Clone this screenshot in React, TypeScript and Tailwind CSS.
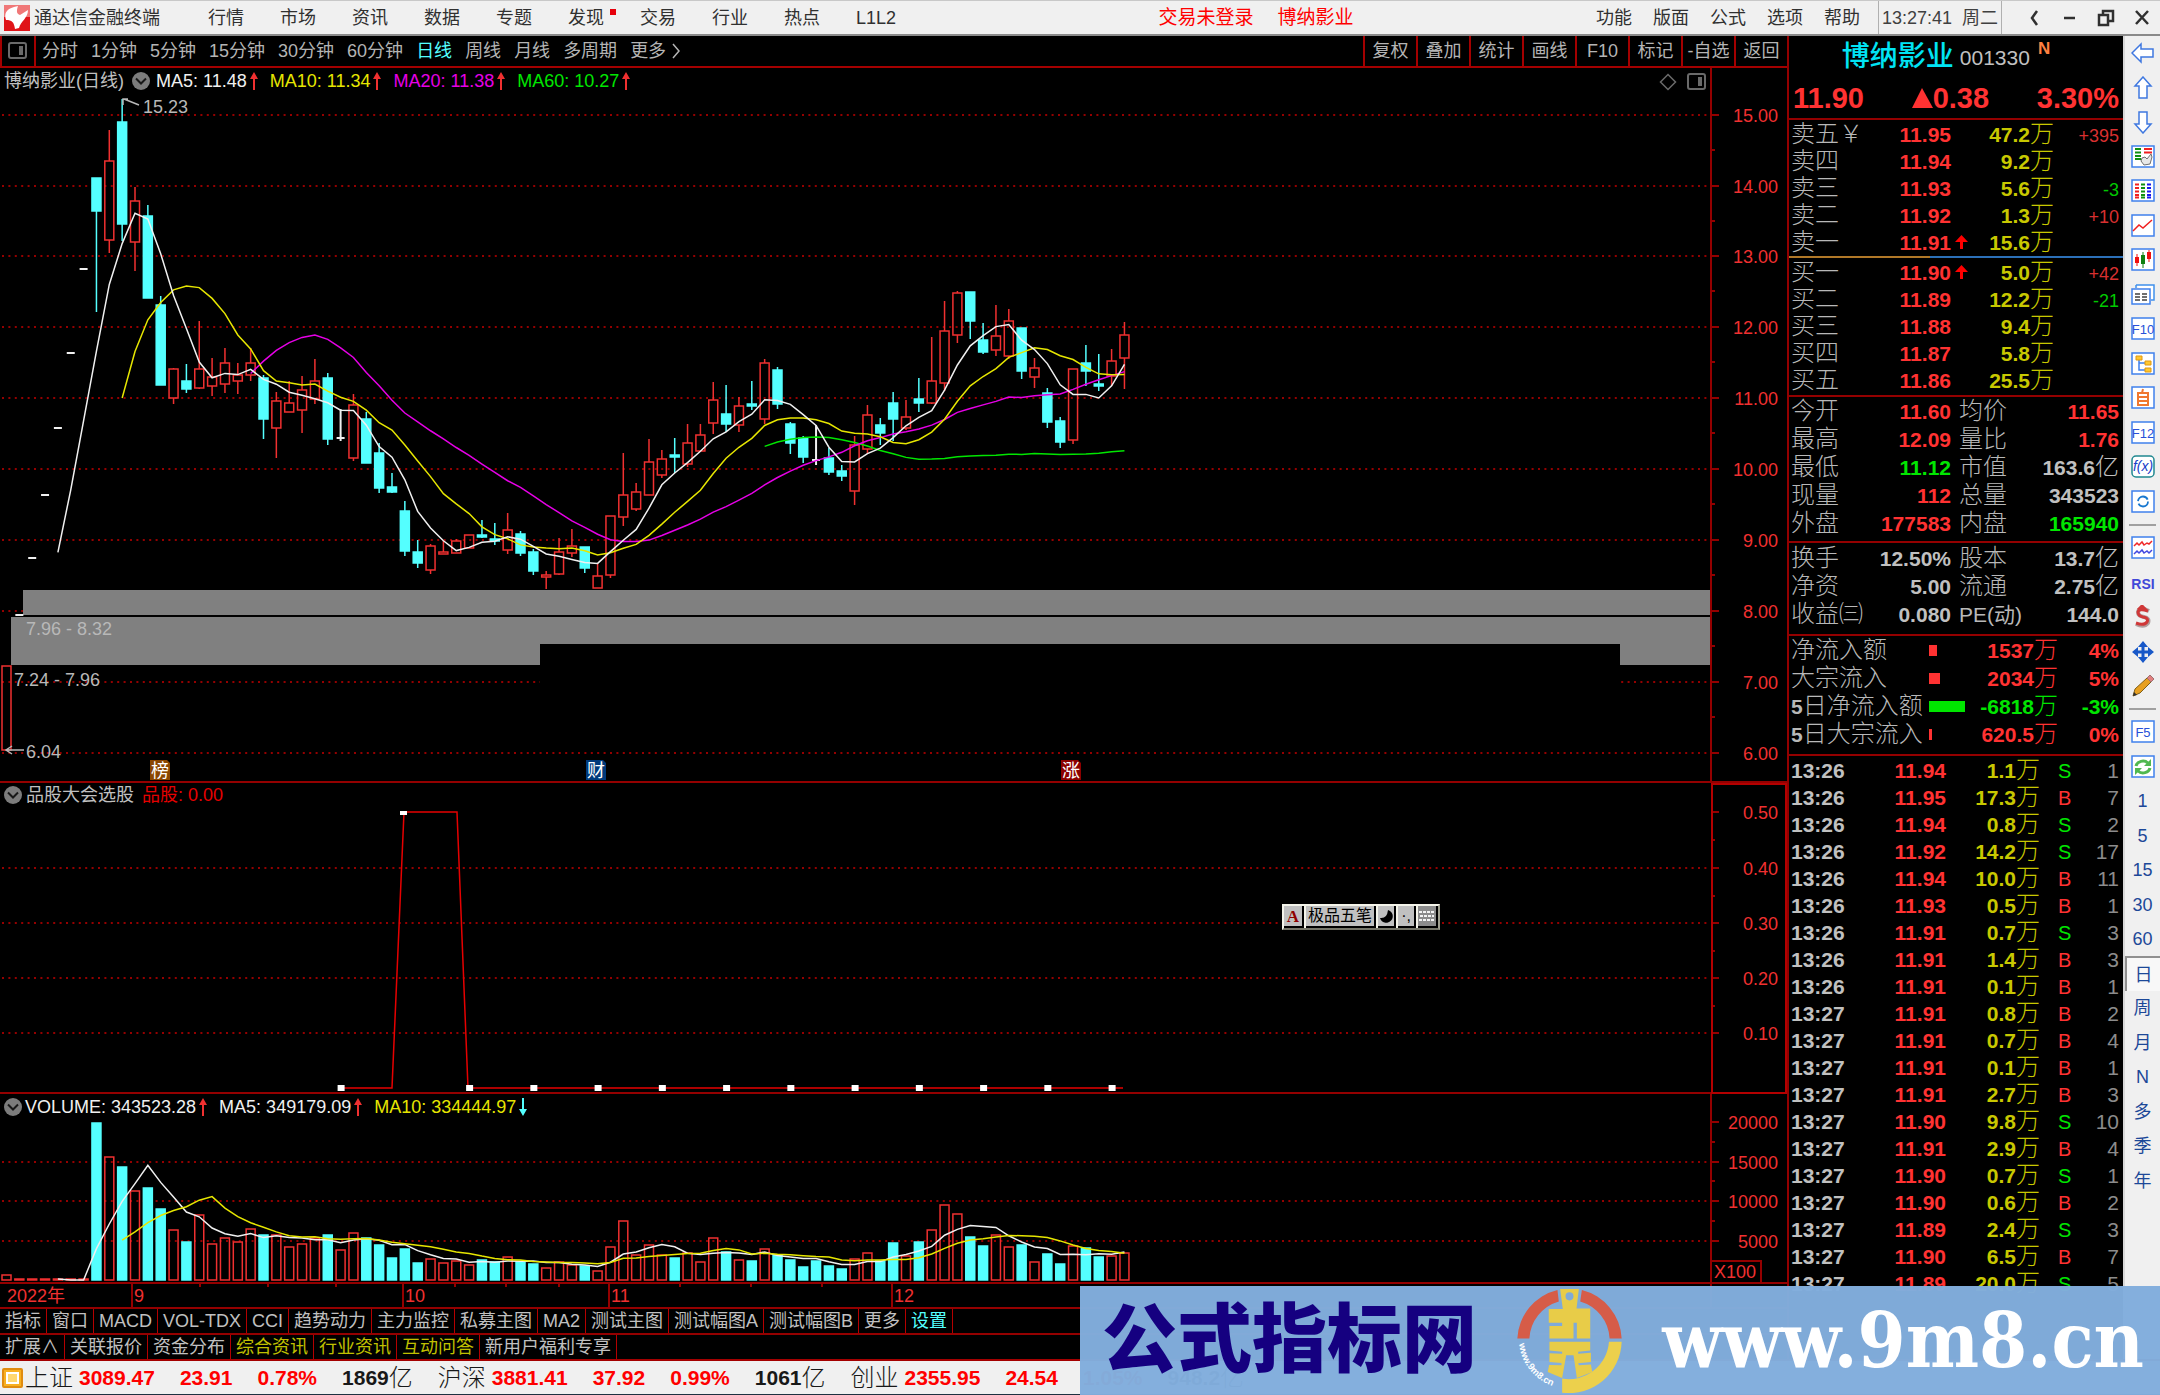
import type { ReactNode } from 'react'
import clsx from 'clsx'

type Kind = 'r' | 'c' | 'w'
// high, body top, body bottom, low, kind (all in chart units)
type Candle = [number, number, number, number, Kind]

const STEP = 12.85
const barX = (i: number) => 6.5 + STEP * i

const candles: Candle[] = [
    [665, 665, 749, 749, 'r'],
    [614, 614, 614, 614, 'w'],
    [557, 557, 557, 557, 'w'],
    [494, 494, 494, 494, 'w'],
    [427, 427, 427, 427, 'w'],
    [352, 352, 352, 352, 'w'],
    [268, 268, 268, 268, 'w'],
    [177, 177, 210, 311, 'c'],
    [129, 160, 239, 252, 'r'],
    [98, 121, 223, 240, 'c'],
    [186, 200, 241, 270, 'r'],
    [204, 215, 297, 297, 'c'],
    [295, 304, 384, 384, 'c'],
    [367, 368, 397, 403, 'r'],
    [363, 380, 388, 392, 'c'],
    [320, 368, 387, 388, 'r'],
    [357, 376, 385, 395, 'r'],
    [347, 362, 383, 392, 'r'],
    [362, 374, 380, 393, 'r'],
    [347, 362, 374, 380, 'r'],
    [374, 377, 418, 438, 'c'],
    [391, 400, 427, 457, 'r'],
    [380, 402, 411, 411, 'r'],
    [375, 389, 409, 432, 'r'],
    [358, 380, 398, 403, 'r'],
    [372, 377, 438, 444, 'c'],
    [408, 437, 437, 440, 'w'],
    [393, 404, 457, 460, 'r'],
    [411, 418, 462, 462, 'c'],
    [442, 452, 487, 492, 'c'],
    [472, 486, 491, 492, 'c'],
    [500, 510, 550, 555, 'c'],
    [539, 551, 562, 567, 'c'],
    [543, 545, 569, 573, 'r'],
    [540, 551, 553, 553, 'r'],
    [538, 540, 552, 552, 'r'],
    [534, 534, 547, 547, 'r'],
    [519, 534, 536, 537, 'c'],
    [522, 538, 540, 544, 'c'],
    [512, 529, 549, 553, 'r'],
    [530, 533, 552, 555, 'c'],
    [548, 551, 570, 574, 'c'],
    [570, 574, 576, 588, 'r'],
    [537, 551, 573, 574, 'r'],
    [528, 545, 552, 556, 'r'],
    [546, 546, 567, 572, 'c'],
    [562, 575, 587, 587, 'r'],
    [515, 515, 574, 577, 'r'],
    [452, 494, 516, 525, 'r'],
    [482, 491, 508, 510, 'r'],
    [438, 461, 494, 494, 'r'],
    [449, 458, 474, 477, 'r'],
    [437, 454, 456, 472, 'c'],
    [423, 442, 463, 466, 'r'],
    [423, 434, 450, 450, 'r'],
    [381, 399, 422, 433, 'r'],
    [384, 413, 423, 431, 'c'],
    [396, 405, 424, 431, 'r'],
    [380, 403, 405, 409, 'c'],
    [358, 362, 418, 423, 'r'],
    [366, 369, 403, 408, 'c'],
    [421, 423, 442, 453, 'c'],
    [435, 437, 456, 462, 'c'],
    [424, 459, 459, 464, 'w'],
    [447, 457, 471, 474, 'c'],
    [464, 470, 475, 480, 'c'],
    [435, 444, 490, 504, 'r'],
    [404, 414, 448, 453, 'r'],
    [417, 424, 432, 444, 'c'],
    [391, 402, 418, 440, 'c'],
    [399, 416, 427, 429, 'r'],
    [377, 398, 402, 411, 'c'],
    [336, 380, 402, 403, 'r'],
    [300, 330, 382, 390, 'r'],
    [290, 292, 334, 342, 'r'],
    [291, 291, 320, 338, 'c'],
    [322, 339, 351, 353, 'c'],
    [304, 335, 349, 355, 'r'],
    [308, 320, 355, 358, 'r'],
    [327, 327, 370, 378, 'c'],
    [357, 367, 376, 387, 'r'],
    [387, 392, 421, 427, 'c'],
    [416, 420, 441, 447, 'c'],
    [368, 368, 439, 443, 'r'],
    [344, 362, 370, 385, 'c'],
    [353, 383, 385, 390, 'c'],
    [348, 360, 375, 385, 'r'],
    [321, 334, 357, 388, 'r'],
]

const volumeTops = [
    1274, 1279, 1279, 1279, 1279, 1279, 1279, 1122, 1156, 1166, 1190, 1187, 1208, 1229, 1241, 1214, 1243, 1237, 1241,
    1228, 1234, 1234, 1246, 1243, 1237, 1234, 1249, 1232, 1237, 1244, 1257, 1248, 1262, 1258, 1262, 1260, 1264, 1259,
    1261, 1256, 1261, 1263, 1267, 1261, 1264, 1265, 1270, 1246, 1220, 1254, 1244, 1254, 1257, 1252, 1261, 1237, 1251,
    1259, 1260, 1248, 1254, 1259, 1266, 1260, 1265, 1268, 1258, 1252, 1260, 1242, 1255, 1241, 1229, 1204, 1213, 1236,
    1245, 1234, 1246, 1244, 1261, 1253, 1263, 1245, 1247, 1256, 1255, 1252,
]
const VOLUME_BASE = 1280

const closes = candles.map(([, top, bottom, , kind]) => (kind === 'c' ? bottom : top))

const average = (values: number[], period: number) =>
    values
        .map((_, i) => {
            if (i < period - 1) return ''
            const slice = values.slice(i - period + 1, i + 1)
            return `${barX(i)},${slice.reduce((a, b) => a + b, 0) / period}`
        })
        .filter(Boolean)
        .join(' ')

const RED = '#f03030'
const CYAN = '#54ffff'
const LINE = '#940000'
const CHART_TEXT = 'font-["Liberation_Sans","Noto_Sans_CJK_SC",sans-serif] text-[18px]'

const menuItems = ['行情', '市场', '资讯', '数据', '专题', '发现', '交易', '行业', '热点', 'L1L2']
const systemItems = ['功能', '版面', '公式', '选项', '帮助']
const periods = ['分时', '1分钟', '5分钟', '15分钟', '30分钟', '60分钟', '日线', '周线', '月线', '多周期']
const chartTools = ['复权', '叠加', '统计', '画线', 'F10', '标记', '-自选', '返回']

const indicatorTabs = [
    '指标', '窗口', 'MACD', 'VOL-TDX', 'CCI', '趋势动力', '主力监控', '私募主图', 'MA2',
    '测试主图', '测试幅图A', '测试幅图B', '更多', '设置',
]
const extensionTabs = ['扩展∧', '关联报价', '资金分布', '综合资讯', '行业资讯', '互动问答', '新用户福利专享']

const sells = [
    ['卖五￥', '11.95', '', '47.2', '+395'],
    ['卖四', '11.94', '', '9.2', ''],
    ['卖三', '11.93', '', '5.6', '-3'],
    ['卖二', '11.92', '', '1.3', '+10'],
    ['卖一', '11.91', 'up', '15.6', ''],
]
const buys = [
    ['买一', '11.90', 'up', '5.0', '+42'],
    ['买二', '11.89', '', '12.2', '-21'],
    ['买三', '11.88', '', '9.4', ''],
    ['买四', '11.87', '', '5.8', ''],
    ['买五', '11.86', '', '25.5', ''],
]

const RED_TEXT = 'text-[#ff3232]'
const GREEN_TEXT = 'text-[#00e600]'
const GRAY_TEXT = 'text-[#c0c0c0]'

const priceStats = [
    ['今开', '11.60', RED_TEXT, '均价', '11.65', '', RED_TEXT],
    ['最高', '12.09', RED_TEXT, '量比', '1.76', '', RED_TEXT],
    ['最低', '11.12', GREEN_TEXT, '市值', '163.6', '亿', GRAY_TEXT],
    ['现量', '112', RED_TEXT, '总量', '343523', '', GRAY_TEXT],
    ['外盘', '177583', RED_TEXT, '内盘', '165940', '', GREEN_TEXT],
]
const companyStats = [
    ['换手', '12.50%', GRAY_TEXT, '股本', '13.7', '亿', GRAY_TEXT],
    ['净资', '5.00', GRAY_TEXT, '流通', '2.75', '亿', GRAY_TEXT],
    ['收益㈢', '0.080', GRAY_TEXT, 'PE(动)', '144.0', '', GRAY_TEXT],
]
const flows = [
    { label: '净流入额', bar: 8, value: '1537', percent: '4%', up: true },
    { label: '大宗流入', bar: 11, value: '2034', percent: '5%', up: true },
    { label: '5日净流入额', bar: 36, value: '-6818', percent: '-3%', up: false },
    { label: '5日大宗流入', bar: 3, value: '620.5', percent: '0%', up: true },
]
const ticks = [
    ['13:26', '11.94', '1.1', 'S', '1'],
    ['13:26', '11.95', '17.3', 'B', '7'],
    ['13:26', '11.94', '0.8', 'S', '2'],
    ['13:26', '11.92', '14.2', 'S', '17'],
    ['13:26', '11.94', '10.0', 'B', '11'],
    ['13:26', '11.93', '0.5', 'B', '1'],
    ['13:26', '11.91', '0.7', 'S', '3'],
    ['13:26', '11.91', '1.4', 'B', '3'],
    ['13:26', '11.91', '0.1', 'B', '1'],
    ['13:27', '11.91', '0.8', 'B', '2'],
    ['13:27', '11.91', '0.7', 'B', '4'],
    ['13:27', '11.91', '0.1', 'B', '1'],
    ['13:27', '11.91', '2.7', 'B', '3'],
    ['13:27', '11.90', '9.8', 'S', '10'],
    ['13:27', '11.91', '2.9', 'B', '4'],
    ['13:27', '11.90', '0.7', 'S', '1'],
    ['13:27', '11.90', '0.6', 'B', '2'],
    ['13:27', '11.89', '2.4', 'S', '3'],
    ['13:27', '11.90', '6.5', 'B', '7'],
    ['13:27', '11.89', '20.0', 'S', '5'],
]

const GridLine = ({ y, to = 1709 }: { y: number; to?: number }) => (
    <line x1="2" x2={to} y1={y} y2={y} stroke={LINE} strokeWidth="2" strokeDasharray="2 4.4" />
)

const AxisLabel = ({ y, children }: { y: number; children: string }) => (
    <>
        <line x1="1712" x2="1719" y1={y} y2={y} stroke={LINE} strokeWidth="2" />
        <text x="1778" y={y + 7} textAnchor="end" fill={RED}>
            {children}
        </text>
    </>
)

const Arrow = ({ down = false }: { down?: boolean }) => (
    <svg width="8" height="18" viewBox="0 0 8 18" className={clsx('shrink-0', down && 'rotate-180')} aria-hidden="true">
        <path d="M4 0 8 7H5V18H3V7H0Z" fill={down ? CYAN : RED} />
    </svg>
)

const Collapse = () => (
    <button aria-label="收起" className="flex size-[18px] items-center justify-center rounded-full bg-[#7c7c7c]">
        <svg width="12" height="8" viewBox="0 0 12 8" fill="none" stroke="#181818" strokeWidth="2">
            <path d="M1 1.5 6 6.5 11 1.5" />
        </svg>
    </button>
)

const Badge = ({ x, fill, children }: { x: number; fill: string; children: string }) => (
    <g>
        <path d={`M${x} 759h17l3 3v17h-20z`} fill={fill} />
        <text x={x + 1} y="776" fill="#fff">
            {children}
        </text>
    </g>
)

const PanelIcon = () => (
    <svg width="20" height="18" viewBox="0 0 20 18" fill="none" stroke="#6a6a6a" strokeWidth="2">
        <rect x="1" y="1" width="17" height="15" rx="2" />
        <rect x="11" y="4" width="4" height="9" fill="#6a6a6a" stroke="none" />
    </svg>
)

const PriceChart = () => (
    <section className="relative">
        <svg viewBox="0 67 1787 715" className={clsx('block h-auto w-full', CHART_TEXT)}>
            {Array.from({ length: 10 }, (_, i) => {
                const y = Math.round(113.6 + i * 70.9)
                return (
                    <g key={i}>
                        <GridLine y={y} />
                        <line x1="1712" x2="1715" y1={y + 35} y2={y + 35} stroke={LINE} strokeWidth="2" />
                        <AxisLabel y={y}>{(15 - i).toFixed(2)}</AxisLabel>
                    </g>
                )
            })}

            <rect x="23" y="589" width="1688" height="25" fill="#808080" />
            <rect x="11" y="616" width="1700" height="48" fill="#808080" />
            <rect x="540" y="643" width="1080" height="46" fill="#000" />

            {candles.map(([high, top, bottom, low, kind], i) => {
                const x = barX(i)
                if (kind === 'w') {
                    return (
                        <g key={i} stroke="#f0f0f0" strokeWidth="2">
                            <line x1={x - 4} x2={x + 4} y1={top} y2={top} />
                            {high !== low && <line x1={x} x2={x} y1={high} y2={low} />}
                        </g>
                    )
                }
                const color = kind === 'r' ? RED : CYAN
                return (
                    <g key={i} stroke={color} strokeWidth="1.5">
                        <path d={`M${x} ${high}V${top}M${x} ${bottom}V${low}`} />
                        <rect
                            x={x - 4.5}
                            y={top}
                            width="9"
                            height={bottom - top}
                            fill={kind === 'c' ? color : 'none'}
                        />
                    </g>
                )
            })}

            <g fill="none" strokeWidth="1.5">
                <polyline points={average(closes, 60)} stroke="#00e600" />
                <polyline points={average(closes, 20)} stroke="#e600e6" />
                <polyline points={average(closes, 10)} stroke="#e6e600" />
                <polyline points={average(closes, 5)} stroke="#f0f0f0" />
            </g>

            <g fill="#b8b8b8">
                <path d="M123 104V98H128M124 98 139 104" fill="none" stroke="#b8b8b8" strokeWidth="1.5" />
                <text x="143" y="112">15.23</text>
                <text x="26" y="634">7.96 - 8.32</text>
                <text x="14" y="685">7.24 - 7.96</text>
                <path d="M24 749H6M12 745 6 749 12 753" fill="none" stroke="#b8b8b8" strokeWidth="1.5" />
                <text x="26" y="757">6.04</text>
            </g>

            <Badge x={150} fill="#8a4600">榜</Badge>
            <Badge x={586} fill="#003a7c">财</Badge>
            <Badge x={1061} fill="#8c0000">涨</Badge>
            <path d="M1711 67V781M0 781H1787" stroke={LINE} strokeWidth="2" />
        </svg>
        <div className="absolute left-1 top-0 flex h-[26px] items-center whitespace-nowrap">
            <span className="text-[#c0c0c0]">博纳影业(日线)</span>
            <span className="ml-2 mr-1.5">
                <Collapse />
            </span>
            <div className="flex items-center gap-3">
                <span className="flex items-center gap-[3px] text-[#f0f0f0]">MA5: 11.48<Arrow /></span>
                <span className="flex items-center gap-[3px] text-[#e6e600]">MA10: 11.34<Arrow /></span>
                <span className="flex items-center gap-[3px] text-[#e600e6]">MA20: 11.38<Arrow /></span>
                <span className="flex items-center gap-[3px] text-[#00e600]">MA60: 10.27<Arrow /></span>
            </div>
        </div>
        <div className="absolute right-20 top-0 flex h-7 items-center gap-2.5">
            <svg width="18" height="18" viewBox="0 0 18 18" fill="none" stroke="#6a6a6a" strokeWidth="1.5">
                <path d="M9 1.5 16.5 9 9 16.5 1.5 9Z" />
            </svg>
            <PanelIcon />
        </div>
    </section>
)

const signalMarks = [26, 36, 41, 46, 51, 56, 61, 66, 71, 76, 81, 86]

const SignalChart = () => (
    <section className="relative">
        <svg viewBox="0 782 1787 311" className={clsx('block h-auto w-full', CHART_TEXT)}>
            {[867, 922, 977, 1032].map((y) => (
                <GridLine key={y} y={y} />
            ))}
            {[811, 867, 922, 977, 1032].map((y, i) => (
                <g key={y}>
                    <AxisLabel y={y}>{(0.5 - i * 0.1).toFixed(2)}</AxisLabel>
                    {i < 4 && <line x1="1712" x2="1715" y1={y + 28} y2={y + 28} stroke={LINE} strokeWidth="2" />}
                </g>
            ))}
            <polyline points="341,1087 392,1087 404,811 457,811 468,1087 1123,1087" fill="none" stroke="#e60000" strokeWidth="1.5" />
            <rect x="400" y="810" width="7" height="4" fill="#fff" />
            {signalMarks.map((i) => (
                <rect key={i} x={barX(i) - 3} y="1084" width="7" height="6" fill="#fff" />
            ))}
            <path d="M0 1092H1711" stroke={LINE} strokeWidth="2" />
            <rect x="1712" y="783" width="74" height="309" fill="none" stroke="#b40000" strokeWidth="2" />
        </svg>
        <div className="absolute left-1 top-0 flex h-6 items-center gap-1 whitespace-nowrap">
            <Collapse />
            <span className="text-[#c0c0c0]">品股大会选股</span>
            <span className="ml-1 text-[#e60000]">品股: 0.00</span>
        </div>
        <div className="absolute left-[1282px] top-[121px] flex h-[26px] items-stretch gap-0.5 border-2 border-[#f4f4ea] border-b-[#77776a] border-r-[#a0a090] bg-[#f4f4ea] text-base text-black">
            <button className="w-5 border-b-2 border-r-2 border-black bg-[#c0c0c0] font-['Liberation_Serif',serif] text-[17px] font-bold leading-none text-[#900000]">
                A
            </button>
            <button className="border-b-2 border-r-2 border-black bg-[#c0c0c0] px-0.5 leading-none">极品五笔</button>
            <button aria-label="半角" className="w-[18px] border-b-2 border-r-2 border-black bg-[#c0c0c0] pl-0.5">
                <svg width="13" height="13" viewBox="0 0 13 13">
                    <path d="M8 0A6.500 6.500 0 1 1 0 8Q7 9 8 0Z" />
                </svg>
            </button>
            <button className="w-[18px] border-b-2 border-r-2 border-black bg-[#c0c0c0] leading-none">·,</button>
            <button aria-label="软键盘" className="w-5 border-b-2 border-r-2 border-black bg-[#8c8c8c]">
                <svg width="17" height="14" viewBox="0 0 17 14" stroke="#f4f4f4" strokeWidth="2" strokeDasharray="3 1">
                    <path d="M1 3H16M2 7H16M1 11H16" />
                </svg>
            </button>
        </div>
    </section>
)

const months: [number, string][] = [
    [132, '9'],
    [403, '10'],
    [609, '11'],
    [892, '12'],
]
const weeks = [200, 268, 336, 455, 506, 559, 680, 751, 822]

const VolumeChart = () => (
    <section className="relative">
        <svg viewBox="0 1093 1787 213" className={clsx('block h-auto w-full', CHART_TEXT)}>
            {[1161, 1200, 1240].map((y) => (
                <g key={y}>
                    <GridLine y={y} />
                    <line x1="1712" x2="1715" y1={y - 20} y2={y - 20} stroke={LINE} strokeWidth="2" />
                </g>
            ))}
            <AxisLabel y={1121}>20000</AxisLabel>
            <AxisLabel y={1161}>15000</AxisLabel>
            <AxisLabel y={1200}>10000</AxisLabel>
            <AxisLabel y={1240}>5000</AxisLabel>
            {volumeTops.map((top, i) => {
                const filled = candles[i][4] === 'c' || i === 63
                return (
                    <rect
                        key={i}
                        x={barX(i) - 4.5}
                        y={Math.min(top, VOLUME_BASE - 2)}
                        width="9"
                        height={Math.max(VOLUME_BASE - top - 1, 1)}
                        fill={filled ? CYAN : 'none'}
                        stroke={filled ? CYAN : RED}
                        strokeWidth="1.5"
                    />
                )
            })}
            <g fill="none" strokeWidth="1.5">
                <polyline points={average(volumeTops, 5)} stroke="#f0f0f0" />
                <polyline points={average(volumeTops, 10)} stroke="#e6e600" />
            </g>
            <path d="M1711 1093V1306M0 1282H1787M1711 1260H1761V1282" fill="none" stroke={LINE} strokeWidth="2" />
            <text x="1714" y="1277" fill={RED}>X100</text>
            <text x="7" y="1301" fill={RED}>2022年</text>
            {months.map(([x, label]) => (
                <g key={x}>
                    <path d={`M${x} 1282V1306`} stroke={LINE} strokeWidth="2" />
                    <text x={x + 2} y="1301" fill={RED}>
                        {label}
                    </text>
                </g>
            ))}
            {weeks.map((x) => (
                <path key={x} d={`M${x} 1282V1286`} stroke={LINE} strokeWidth="2" />
            ))}
        </svg>
        <div className="absolute left-1 top-0 flex h-[26px] items-center gap-3 whitespace-nowrap">
            <span className="flex items-center gap-[3px] text-[#f0f0f0]"><Collapse />VOLUME: 343523.28<Arrow /></span>
            <span className="flex items-center gap-[3px] text-[#f0f0f0]">MA5: 349179.09<Arrow /></span>
            <span className="flex items-center gap-[3px] text-[#e6e600]">MA10: 334444.97<Arrow down /></span>
        </div>
    </section>
)

const WindowIcon = ({ label, d }: { label: string; d: string }) => (
    <button aria-label={label} className="flex w-9 justify-center">
        <svg width="20" height="20" viewBox="0 0 20 20" fill="none" stroke="#303030" strokeWidth="2.5">
            <path d={d} />
        </svg>
    </button>
)

const TitleBar = () => (
    <header className="flex h-9 items-center whitespace-nowrap border-b-2 border-t border-b-[#8a8a8a] border-t-[#c8c8c8] bg-[#f0f0f0] text-[#303030]">
        <svg width="26" height="26" viewBox="0 0 26 26" className="ml-1 mr-1 shrink-0" aria-hidden="true">
            <rect width="26" height="26" fill="#e01418" />
            <rect width="26" height="12" fill="#f07878" />
            <path d="M10 2 14 1C12 7 13 9 16 10L24 5C24 13 17 16 15 23L11 24C10 17 8 15 2 15C0 9 2 4 10 2Z" fill="#fff" />
        </svg>
        <h1>通达信金融终端</h1>
        <nav className="ml-12 flex gap-9">
            {menuItems.map((item) => (
                <button key={item} className="relative">
                    {item}
                    {item === '发现' && <span className="absolute -right-3 top-0 size-1.5 bg-red-600" />}
                </button>
            ))}
        </nav>
        <div className="flex-[13]" />
        <div className="flex gap-6 text-[19px] text-[#ff0000]">
            <button>交易未登录</button>
            <button>博纳影业</button>
        </div>
        <div className="flex-[12]" />
        <nav className="flex gap-[21px]">
            {systemItems.map((item) => (
                <button key={item}>{item}</button>
            ))}
        </nav>
        <div className="ml-[18px] flex h-full items-center gap-2.5 border-x border-[#b0b0b0] px-[3px] text-[#404040]">
            <time className="font-['Liberation_Sans',sans-serif]">13:27:41</time>
            <span>周二</span>
        </div>
        <div className="ml-3.5 flex">
            <WindowIcon label="后退" d="M13 3 8 10 13 17" />
            <WindowIcon label="最小化" d="M4 10H15" />
            <WindowIcon label="还原" d="M3 7H12V17H3ZM7 7V3H17V13H12" />
            <WindowIcon label="关闭" d="M4 3 16 16M16 3 4 16" />
        </div>
    </header>
)

const Toolbar = () => (
    <div className="flex h-8 items-stretch whitespace-nowrap border-b-2 border-[#a40000] text-[#b4b4b4]">
        <button aria-label="面板" className="flex w-[36px] items-center justify-center border-x-2 border-[#a40000]">
            <PanelIcon />
        </button>
        <div className="ml-1.5 flex items-center gap-[13px]">
            {periods.map((item) => (
                <button key={item} className={item === '日线' ? 'text-[#54ffff]' : ''}>
                    {item}
                </button>
            ))}
            <button className="flex items-center gap-1.5">
                更多
                <svg width="8" height="16" viewBox="0 0 8 16" fill="none" stroke="#b4b4b4" strokeWidth="1.5">
                    <path d="M1 1 7 8 1 15" />
                </svg>
            </button>
        </div>
        <div className="ml-auto flex">
            {chartTools.map((item) => (
                <button key={item} className="w-[53px] border-l-2 border-[#a40000]">
                    {item}
                </button>
            ))}
        </div>
    </div>
)

const tabColor = (tab: string) => {
    if (tab === '设置') return 'text-[#54ffff]'
    if (['综合资讯', '行业资讯', '互动问答'].includes(tab)) return 'text-[#c0c000]'
    return 'text-[#c0c0c0]'
}

const TabRow = ({ tabs }: { tabs: string[] }) => (
    <div className="flex h-[26px] items-stretch whitespace-nowrap border-t-2 border-[#940000]">
        {tabs.map((tab) => (
            <button key={tab} className={clsx('border-r border-[#b40000] px-[5px] leading-none', tabColor(tab))}>
                {tab}
            </button>
        ))}
    </div>
)

const NUMBER = "font-['Liberation_Sans','Noto_Sans_CJK_SC',sans-serif] text-[21px] font-bold"
const UNIT = "font-['Noto_Sans_CJK_SC',sans-serif] text-[24px] font-light"

const Depth = ({ rows }: { rows: string[][] }) => (
    <table className="w-full table-fixed whitespace-nowrap leading-none">
        <colgroup>
            <col className="w-[72px]" />
            <col className="w-[88px]" />
            <col className="w-[22px]" />
            <col className="w-[81px]" />
            <col />
        </colgroup>
        <tbody>
            {rows.map(([label, price, up, volume, change]) => (
                <tr key={label} className="h-[27px] align-baseline">
                    <th className={clsx('p-0 text-left text-[#b8b8b8]', UNIT)}>{label}</th>
                    <td className={clsx('p-0 text-right', NUMBER, RED_TEXT)}>{price}</td>
                    <td className="p-0 pl-1 align-middle">
                        {up && (
                            <svg width="13" height="14" viewBox="0 0 13 14" fill="#ff0000" aria-hidden="true">
                                <path d="M6.5 0 13 7H8V14H5V7H0Z" />
                            </svg>
                        )}
                    </td>
                    <td className={clsx('p-0 text-right text-[#c8c800]', NUMBER)}>
                        {volume}
                        <span className={UNIT}>万</span>
                    </td>
                    <td
                        className={clsx(
                            "p-0 text-right font-['Liberation_Sans',sans-serif] text-[18px]",
                            change.startsWith('-') ? 'text-[#00c800]' : 'text-[#d83030]',
                        )}
                    >
                        {change}
                    </td>
                </tr>
            ))}
        </tbody>
    </table>
)

const Stats = ({ rows }: { rows: string[][] }) => (
    <table className="w-full table-fixed whitespace-nowrap leading-none">
        <colgroup>
            <col className="w-[72px]" />
            <col className="w-[88px]" />
            <col className="w-[76px]" />
            <col />
        </colgroup>
        <tbody>
            {rows.map(([label, value, color, label2, value2, unit, color2]) => (
                <tr key={label} className="h-7 align-baseline">
                    <th className={clsx('p-0 text-left text-[#b8b8b8]', UNIT)}>{label}</th>
                    <td className={clsx('p-0 text-right', NUMBER, color)}>{value}</td>
                    <th className={clsx('p-0 pl-2 text-left text-[#b8b8b8]', UNIT)}>
                        {label2.startsWith('PE') ? (
                            <span className="font-['Liberation_Sans','Noto_Sans_CJK_SC',sans-serif] text-[21px] font-normal">
                                {label2}
                            </span>
                        ) : (
                            label2
                        )}
                    </th>
                    <td className={clsx('p-0 text-right', NUMBER, color2)}>
                        {value2}
                        {unit && <span className={UNIT}>{unit}</span>}
                    </td>
                </tr>
            ))}
        </tbody>
    </table>
)

const QuotePanel = () => (
    <aside className="w-[336px] shrink-0 border-l-2 border-[#940000] bg-black">
        <div className="flex h-[82px] flex-col">
            <div className="flex h-[42px] items-center justify-center pr-5">
                <h2 className="text-[28px] font-medium leading-none text-[#00e4f4]">博纳影业</h2>
                <span className="ml-1.5 font-['Liberation_Sans',sans-serif] text-[21px] text-[#c0c0c0]">001330</span>
                <sup className="ml-2 font-['Liberation_Sans',sans-serif] text-[17px] font-bold text-[#ff8040]">N</sup>
            </div>
            <div className="flex items-center justify-between px-1 font-['Liberation_Sans',sans-serif] text-[29px] font-bold leading-10 text-[#ff3232]">
                <span>11.90</span>
                <span className="flex items-center">
                    <svg width="21" height="20" viewBox="0 0 21 20" fill="#ff3232" aria-hidden="true">
                        <path d="M10 0 21 20H0Z" />
                    </svg>
                    0.38
                </span>
                <span>3.30%</span>
            </div>
        </div>
        <div className="border-t-2 border-[#940000] pb-px pl-0.5 pr-1">
            <Depth rows={sells} />
        </div>
        <div className="flex h-0.5">
            <div className="w-[141px] bg-[#b07828]" />
            <div className="flex-1 bg-[#2c70b8]" />
        </div>
        <div className="pb-0.5 pl-0.5 pr-1">
            <Depth rows={buys} />
        </div>
        <div className="border-t-2 border-[#940000] pb-1 pl-0.5 pr-1">
            <Stats rows={priceStats} />
        </div>
        <div className="border-t-2 border-[#940000] pb-1.5 pl-0.5 pr-1 pt-px">
            <Stats rows={companyStats} />
        </div>
        <div className="border-t-2 border-[#940000] pb-1.5 pl-0.5 pr-1">
            <table className="w-full table-fixed whitespace-nowrap leading-none">
                <colgroup>
                    <col className="w-[138px]" />
                    <col className="w-9" />
                    <col className="w-[93px]" />
                    <col />
                </colgroup>
                <tbody>
                    {flows.map(({ label, bar, value, percent, up }) => (
                        <tr key={label} className={clsx('h-7 align-baseline', up ? RED_TEXT : GREEN_TEXT)}>
                            <th className={clsx('p-0 text-left text-[#b8b8b8]', UNIT)}>
                                {label.startsWith('5') && <span className={NUMBER}>5</span>}
                                {label.replace('5', '')}
                            </th>
                            <td className="p-0 align-middle">
                                <div className="h-[11px] bg-current" style={{ width: bar }} />
                            </td>
                            <td className={clsx('p-0 text-right', NUMBER)}>
                                {value}
                                <span className={UNIT}>万</span>
                            </td>
                            <td className={clsx('p-0 text-right', NUMBER)}>{percent}</td>
                        </tr>
                    ))}
                </tbody>
            </table>
        </div>
        <div className="border-t-2 border-[#940000] pl-0.5 pr-1">
            <table className="w-full table-fixed whitespace-nowrap leading-none">
                <colgroup>
                    <col className="w-14" />
                    <col className="w-[99px]" />
                    <col className="w-[94px]" />
                    <col className="w-10" />
                    <col />
                </colgroup>
                <tbody>
                    {ticks.map(([time, price, volume, side, count], i) => (
                        <tr key={i} className="h-[27px] align-baseline">
                            <td className={clsx('p-0', NUMBER, GRAY_TEXT)}>{time}</td>
                            <td className={clsx('p-0 text-right', NUMBER, RED_TEXT)}>{price}</td>
                            <td className={clsx('p-0 text-right text-[#c8c800]', NUMBER)}>
                                {volume}
                                <span className={UNIT}>万</span>
                            </td>
                            <td
                                className={clsx(
                                    "p-0 pl-[18px] font-['Liberation_Sans',sans-serif] text-[20px]",
                                    side === 'S' ? GREEN_TEXT : RED_TEXT,
                                )}
                            >
                                {side}
                            </td>
                            <td className="p-0 text-right font-['Liberation_Sans',sans-serif] text-[21px] text-[#8c8c8c]">
                                {count}
                            </td>
                        </tr>
                    ))}
                </tbody>
            </table>
        </div>
    </aside>
)

const Framed = ({ children }: { children?: ReactNode }) => (
    <>
        <rect x="1" y="1" width="22" height="21" fill="#fff" stroke="#3f80ec" strokeWidth="1.5" />
        {children}
    </>
)

const FramedText = ({ children }: { children: string }) => (
    <Framed>
        <text x="12" y="17" textAnchor="middle" fill="#2850d8" className="font-['Liberation_Sans',sans-serif] text-[13px]">
            {children}
        </text>
    </Framed>
)

const arrowStyle = { fill: '#fff', stroke: '#3f78e0', strokeWidth: 1.5 }

const sideIcons: [string, ReactNode][] = [
    ['左移', <path d="M1 12 10 3V8H22V16H10V21Z" {...arrowStyle} />],
    ['上移', <path d="M12 1 20 10H16V22H8V10H4Z" {...arrowStyle} />],
    ['下移', <path d="M12 23 20 14H16V2H8V14H4Z" {...arrowStyle} />],
    [
        '自选行情',
        <Framed>
            <path d="M4 4H10M4 7.500H10M4 11H10M4 14H10" stroke="#109010" strokeWidth="2" />
            <path d="M13 4H21M13 7.500H21" stroke="#f02020" strokeWidth="2" />
            <path d="M11 13 14 12 16 14 20 9 21 12 19 19 13 20 10 16Z" fill="#e8e8e8" stroke="#707070" />
        </Framed>,
    ],
    [
        '报价表',
        <Framed>
            <path d="M4 5.500H8M4 9H8M4 12.500H8M4 16H8M4 18.500H8" stroke="#f02020" strokeWidth="1.800" />
            <path d="M10 5.500H14M10 9H14M10 12.500H14M10 16H14M10 18.500H14" stroke="#109010" strokeWidth="1.800" />
            <path d="M16 5.500H20M16 9H20M16 12.500H20M16 16H20M16 18.500H20" stroke="#1818f0" strokeWidth="1.800" />
        </Framed>,
    ],
    ['分时图', <Framed><path d="M2 17 8 11 12 14 21 6" fill="none" stroke="#f02020" strokeWidth="1.500" /></Framed>],
    [
        'K线图',
        <Framed>
            <path d="M6 6V18M18 2V14" stroke="#f01010" />
            <path d="M12 4V20" stroke="#108010" />
            <path d="M4 9H8V15H4ZM16 4H20V11H16Z" fill="#f01010" />
            <path d="M10 7H14V16H10Z" fill="#108010" />
        </Framed>,
    ],
    [
        '资料',
        <>
            <path d="M5 2H23V17H20M5 5V2" fill="#fff" stroke="#3f90ec" strokeWidth="1.500" />
            <rect x="1" y="6" width="18" height="15" fill="#fff" stroke="#3f80ec" strokeWidth="1.500" />
            <path d="M4 11H9M11 11H16M4 14H9M11 14H16M4 17H9M11 17H16" stroke="#404040" strokeWidth="1.500" />
        </>,
    ],
    ['F10', <FramedText>F10</FramedText>],
    [
        '板块',
        <Framed>
            <path d="M8 6V18H14M8 11H14" fill="none" stroke="#3f80ec" strokeWidth="1.500" />
            <path d="M5 4H11V8H5ZM14 9H20V13H14ZM14 16H20V20H14Z" fill="#ffc830" stroke="#e09810" />
        </Framed>,
    ],
    [
        '自选',
        <Framed>
            <path d="M7 7H17V19H7ZM7 11H17M7 15H17M12 3 11 7" fill="none" stroke="#f07830" strokeWidth="2" />
        </Framed>,
    ],
    ['F12', <FramedText>F12</FramedText>],
    [
        '公式管理',
        <>
            <rect x="1" y="1" width="22" height="21" rx="4" fill="#fff" stroke="#208890" strokeWidth="1.500" />
            <text x="12" y="16" textAnchor="middle" fill="#1840c8" className="font-['Liberation_Sans',sans-serif] text-[14px] italic">
                f(x)
            </text>
        </>,
    ],
    [
        '刷新',
        <Framed>
            <circle cx="12" cy="11.500" r="5" fill="none" stroke="#1878d0" strokeWidth="1.800" strokeDasharray="13 2.700" />
        </Framed>,
    ],
]

const drawIcons: [string, ReactNode][] = [
    [
        '多股同列',
        <Framed>
            <path d="M3 10 6 7 8 9 11 6 13 9 16 7 18 8 21 5" fill="none" stroke="#f02828" strokeWidth="1.500" />
            <path d="M3 18 6 15 8 17 11 14 13 17 16 15 18 17 21 14" fill="none" stroke="#4048e0" strokeWidth="1.500" />
        </Framed>,
    ],
    [
        'RSI',
        <text x="12" y="18" textAnchor="middle" fill="#4048d8" className="font-['Liberation_Sans',sans-serif] text-[14px] font-bold">
            RSI
        </text>,
    ],
    [
        '交易',
        <>
            <path d="M18 6Q8 1 7 7Q7 11 13 12Q19 13 17 18Q13 23 5 19" fill="none" stroke="#b0a0a0" strokeWidth="4" />
            <path d="M17 6Q8 3 7 7Q7 11 12 12Q18 13 16 17Q13 21 5 18M11 1V5M7 5 11 1 15 5" fill="none" stroke="#d03838" strokeWidth="3" />
        </>,
    ],
    [
        '移动',
        <>
            <path d="M12 1 17 7H7ZM12 23 17 17H7ZM1 12 7 7V17ZM23 12 17 7V17Z" fill="#1858c8" />
            <path d="M12 6V18M6 12H18" stroke="#1858c8" strokeWidth="3" />
        </>,
    ],
    [
        '画线工具',
        <>
            <path d="M2 22 4 15 16 4 20 8 9 19Z" fill="#e8a020" stroke="#806018" />
            <path d="M16 4 19 1 23 5 20 8Z" fill="#e08080" stroke="#a07070" />
            <path d="M2 22 3 18 6 21Z" fill="#303030" />
        </>,
    ],
]

const lowerIcons: [string, ReactNode][] = [
    ['F5', <FramedText>F5</FramedText>],
    [
        '更新数据',
        <Framed>
            <path d="M5 11A7 6 0 0 1 17 8M19 13A7 6 0 0 1 7 16" fill="none" stroke="#50b850" strokeWidth="3" />
            <path d="M20 4V11H13ZM4 20V13H11Z" fill="#50b850" />
        </Framed>,
    ],
]
const sidePeriods = ['1', '5', '15', '30', '60', '日', '周', '月', 'N', '多', '季', '年']

const SIDE_ITEM = 'flex w-full items-center justify-center odd:h-[34px] even:h-[35px]'

const IconButtons = ({ items }: { items: [string, ReactNode][] }) =>
    items.map(([label, icon]) => (
        <button key={label} aria-label={label} className={SIDE_ITEM}>
            <svg width="24" height="24" viewBox="0 0 24 24">
                {icon}
            </svg>
        </button>
    ))

const SideBar = () => (
    <aside className="w-[37px] shrink-0 border-l-2 border-[#d8d8d8] bg-[#f0f0f0] text-[#1c4898]">
        <div>
            <IconButtons items={sideIcons} />
        </div>
        <hr className="mx-1 my-[5px] border-t-2 border-[#a0a0a0]" />
        <div>
            <IconButtons items={drawIcons} />
        </div>
        <hr className="mx-1 my-[5px] border-t-2 border-[#a0a0a0]" />
        <div>
            <IconButtons items={lowerIcons} />
            {sidePeriods.map((item) => (
                <button
                    key={item}
                    className={clsx(
                        SIDE_ITEM,
                        item === '日' && 'border-l-2 border-t-2 border-[#909090] bg-[#f8f8f8]',
                    )}
                >
                    {item}
                </button>
            ))}
        </div>
    </aside>
)

const indexes = [
    ['上证', '3089.47', '23.91', '0.78%', '1869'],
    ['沪深', '3881.41', '37.92', '0.99%', '1061'],
    ['创业', '2355.95', '24.54', '1.05%', '948.2'],
]

const StatusBar = () => (
    <footer className="flex h-9 items-center whitespace-nowrap border-b border-t-2 border-b-[#1c3040] border-t-[#a40000] bg-[#f0f0f0] text-[21px] leading-none text-[#181818]">
        <svg width="21" height="20" viewBox="0 0 21 20" className="ml-0.5 mr-0.5 shrink-0" aria-hidden="true">
            <rect x="1" y="1" width="19" height="18" rx="1" fill="#f8b020" stroke="#e08c10" strokeWidth="2" />
            <rect x="5" y="5" width="11" height="10" fill="#ffd870" stroke="#fff" strokeWidth="2" />
        </svg>
        <div className="flex gap-[25px]">
            {indexes.map(([name, value, change, percent, amount]) => (
                <div key={name} className="flex items-center gap-[25px] font-['Liberation_Sans','Noto_Sans_CJK_SC',sans-serif] font-bold">
                    <span className="flex items-center gap-1.5 text-[#ff0000]">
                        <span className="text-2xl font-light leading-none text-[#181818]">{name}</span>
                        {value}
                    </span>
                    <span className="text-[#ff0000]">{change}</span>
                    <span className="text-[#ff0000]">{percent}</span>
                    <span className="flex items-center">
                        {amount}
                        <span className="text-2xl font-light leading-none">亿</span>
                    </span>
                </div>
            ))}
        </div>
    </footer>
)

const SiteBanner = () => (
    <a
        href="#"
        className="absolute bottom-0 right-0 flex h-[109px] w-1/2 items-center justify-between whitespace-nowrap bg-[#82addc]/98 pl-[22px] pr-4"
    >
        <span className="text-[75px] font-black leading-none text-[#150080]">公式指标网</span>
        <svg width="107" height="107" viewBox="40 8 320 320" aria-hidden="true">
            <path d="M44 162A157 157 0 0 1 164 17L168 51A122 122 0 0 0 80 162Z" fill="#d65c48" />
            <path d="M237 17A157 157 0 0 1 356 162H320A122 122 0 0 0 232 51Z" fill="#d65c48" />
            <path d="M356 172A158 158 0 0 1 178 324V282A120 120 0 0 0 318 172Z" fill="#ecd04c" />
            <path
                fillRule="evenodd"
                d="M172 14H228L221 72H262V162H222V115H212V162H140V125H178V115H138V74H180ZM200 24A12 12 0 1 0 200 48A12 12 0 1 0 200 24Z"
                fill="#e8cc48"
            />
            <path
                d="M140 172H262V198L226 202V208L264 205V232L226 236 228 242 264 240 268 262 222 280 212 212H190L178 280 135 262 139 241 176 242V235L140 232V206L178 208V202L140 198Z"
                fill="#e8cc48"
            />
            <path id="ring" d="M49 178A152 152 0 0 0 172 310" fill="none" />
            <text fill="#fff" className="font-['Liberation_Sans',sans-serif] text-[28px] font-bold">
                <textPath href="#ring">www.9m8.cn</textPath>
            </text>
        </svg>
        <span className="font-['DejaVu_Serif_Condensed','DejaVu_Serif',serif] text-[77px] font-bold leading-none text-white">
            www.9m8.cn
        </span>
    </a>
)

const App = () => (
    <div className="relative min-h-screen overflow-hidden bg-black font-['Liberation_Sans','Noto_Sans_CJK_SC',sans-serif] text-[18px] leading-none">
        <TitleBar />
        <div className="flex">
            <main className="min-w-0 flex-1">
                <Toolbar />
                <PriceChart />
                <SignalChart />
                <VolumeChart />
                <TabRow tabs={indicatorTabs} />
                <TabRow tabs={extensionTabs} />
            </main>
            <QuotePanel />
            <SideBar />
        </div>
        <StatusBar />
        <SiteBanner />
    </div>
)

export default App
